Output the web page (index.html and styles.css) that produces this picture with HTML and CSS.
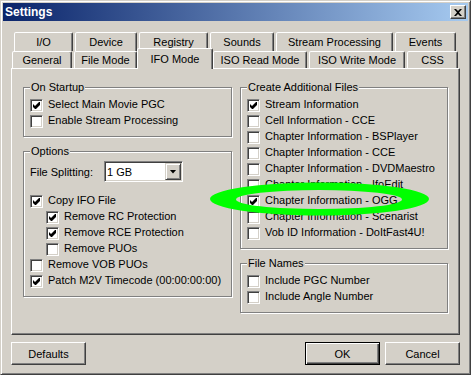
FILE: index.html
```html
<!DOCTYPE html>
<html lang="en">

<head>
	<meta charset="UTF-8">
	<title>Settings</title>
	<link rel="stylesheet" href="styles.css">
</head>

<body>
	<div class="window">
		<div class="titlebar">
			<span class="title">Settings</span>
			<span class="close">
				<svg width="8" height="7" viewBox="0 0 8 7"><path d="M0 0h2l2 2 2-2h2L5 3.5 8 7H6L4 5 2 7H0l3-3.5z"/></svg>
			</span>
		</div>
		<div class="client">
			<!-- tabs -->
			<div class="tabs">
				<div class="tabrow back">
					<div class="tab">I/O</div>
					<div class="tab">Device</div>
					<div class="tab">Registry</div>
					<div class="tab">Sounds</div>
					<div class="tab">Stream Processing</div>
					<div class="tab">Events</div>
				</div>
				<div class="tabrow front">
					<div class="tab">General</div>
					<div class="tab">File Mode</div>
					<div class="tab active">IFO Mode</div>
					<div class="tab">ISO Read Mode</div>
					<div class="tab">ISO Write Mode</div>
					<div class="tab">CSS</div>
				</div>
			</div>

			<div class="panel">
				<div class="col">
					<fieldset class="group">
						<legend>On Startup</legend>
						<div class="check"><span class="box on"></span>Select Main Movie PGC</div>
						<div class="check"><span class="box"></span>Enable Stream Processing</div>
					</fieldset>
					<fieldset class="group">
						<legend>Options</legend>
						<div class="field">
							<span class="field-label">File Splitting:</span>
							<div class="combo">
								<span class="combo-value">1 GB</span>
								<span class="combo-btn"><span class="arrow"></span></span>
							</div>
						</div>
						<div class="check"><span class="box on"></span>Copy IFO File</div>
						<div class="check sub"><span class="box on"></span>Remove RC Protection</div>
						<div class="check sub"><span class="box on"></span>Remove RCE Protection</div>
						<div class="check sub"><span class="box"></span>Remove PUOs</div>
						<div class="check"><span class="box"></span>Remove VOB PUOs</div>
						<div class="check"><span class="box on"></span>Patch M2V Timecode (00:00:00:00)</div>
					</fieldset>
				</div>
				<div class="col">
					<fieldset class="group">
						<legend>Create Additional Files</legend>
						<div class="check"><span class="box on"></span>Stream Information</div>
						<div class="check"><span class="box"></span>Cell Information - CCE</div>
						<div class="check"><span class="box"></span>Chapter Information - BSPlayer</div>
						<div class="check"><span class="box"></span>Chapter Information - CCE</div>
						<div class="check"><span class="box"></span>Chapter Information - DVDMaestro</div>
						<div class="check"><span class="box"></span>Chapter Information - IfoEdit</div>
						<div class="check"><span class="box on"></span>Chapter Information - OGG</div>
						<div class="check"><span class="box"></span>Chapter Information - Scenarist</div>
						<div class="check"><span class="box"></span>Vob ID Information - DoItFast4U!</div>
					</fieldset>
					<fieldset class="group">
						<legend>File Names</legend>
						<div class="check"><span class="box"></span>Include PGC Number</div>
						<div class="check"><span class="box"></span>Include Angle Number</div>
					</fieldset>
				</div>
			</div>

			<div class="buttons">
				<button class="btn">Defaults</button>
				<button class="btn default">OK</button>
				<button class="btn">Cancel</button>
			</div>
		</div>

		<!-- green marker drawn over the dialog -->
		<svg class="marker" width="471" height="375" viewBox="0 0 471 375">
			<path fill="#00ff00" fill-rule="evenodd" d="M210 199a109.5 16.5 0 1 0 219 0a109.5 16.5 0 1 0-219 0zM236 199.5a83 9.5 0 1 0 166 0a83 9.5 0 1 0-166 0z"/>
		</svg>
	</div>
</body>

</html>
```

FILE: styles.css
```css
body {
	margin: 0;
	padding: 0;
	background-color: #D4D0C8;
	font-family: "Liberation Sans", Arial, sans-serif;
	font-size: 11px;
	color: #000;
}

.window {
	position: relative;
	width: 471px;
	height: 375px;
	box-sizing: border-box;
	padding: 2px;
	border: 1px solid;
	border-color: #D4D0C8 #404040 #404040 #D4D0C8;
	box-shadow: inset 1px 1px #FFF, inset -1px -1px #808080;
}

.titlebar {
	height: 18px;
	padding: 0 2px;
	display: flex;
	align-items: center;
	justify-content: space-between;
	background: linear-gradient(to right, #0A246A, #A6CAF0);
}

.title {
	color: #FFF;
	font-weight: bold;
	font-size: 12px;
}

.close {
	width: 16px;
	height: 14px;
	box-sizing: border-box;
	display: flex;
	align-items: center;
	justify-content: center;
	background-color: #D4D0C8;
	border: 1px solid;
	border-color: #FFF #404040 #404040 #FFF;
	box-shadow: inset -1px -1px #808080;
}

.client {
	padding: 11px 8px 0;
}

/* tabs */
.tabrow {
	display: grid;
	column-gap: 2px;
}

.tabrow.back {
	height: 19px;
	margin-left: 3px;
	grid-template-columns: 59px 62px 69px 64px 117px 61px;
}

.tabrow.front {
	height: 17px;
	margin-left: 1px;
	grid-template-columns: 60px 63px 72px 94px 96px 51px;
}

.tab {
	box-sizing: border-box;
	display: flex;
	align-items: center;
	justify-content: center;
	background-color: #D4D0C8;
	border: 1px solid;
	border-bottom: none;
	border-color: #FFF #404040 transparent #FFF;
	border-radius: 2px 2px 0 0;
	box-shadow: inset -1px 0 #808080;
	white-space: nowrap;
}

.tab.active {
	position: relative;
	z-index: 1;
	margin: -3px -2px -1px;
	padding-bottom: 1px;
}

/* page */
.panel {
	height: 267px;
	box-sizing: border-box;
	padding: 12px 0 0 11px;
	display: grid;
	grid-template-columns: 209px 208px;
	column-gap: 8px;
	align-items: start;
	border: 1px solid;
	border-color: #FFF #404040 #404040 #FFF;
	box-shadow: inset -1px -1px #808080;
}

.group {
	min-width: 0;
	margin: 0 0 8px;
	padding: 3px 6px 7px;
	border: 1px solid #808080;
	box-shadow: 1px 1px #FFF, inset 1px 1px #FFF;
}

.group legend {
	padding: 0 1px;
	line-height: 13px;
	background-color: #D4D0C8;
}

.check {
	height: 16px;
	line-height: 15px;
	display: flex;
	align-items: flex-start;
	white-space: nowrap;
}

.check.sub {
	padding-left: 16px;
}

.box {
	flex: none;
	width: 13px;
	height: 13px;
	margin: 2px 5px 0 0;
	box-sizing: border-box;
	display: flex;
	align-items: center;
	justify-content: center;
	background-color: #FFF;
	border: 1px solid;
	border-color: #808080 #FFF #FFF #808080;
	box-shadow: inset 1px 1px #404040, inset -1px -1px #D4D0C8;
}

.box.on::after {
	content: "";
	width: 7px;
	height: 7px;
	background-color: #000;
	clip-path: polygon(0 2px, 2px 4px, 6px 0, 7px 0, 7px 3px, 3px 7px, 2px 7px, 0 5px);
}

.field {
	height: 21px;
	margin-bottom: 11px;
	display: flex;
	align-items: center;
}

.field-label {
	width: 74px;
}

.combo {
	width: 79px;
	height: 21px;
	box-sizing: border-box;
	padding: 1px;
	display: flex;
	align-items: center;
	background-color: #FFF;
	border: 1px solid;
	border-color: #808080 #FFF #FFF #808080;
	box-shadow: inset 1px 1px #404040, inset -1px -1px #D4D0C8;
}

.combo-value {
	padding-left: 1px;
}

.combo-btn {
	width: 16px;
	height: 17px;
	margin-left: auto;
	box-sizing: border-box;
	display: flex;
	align-items: center;
	justify-content: center;
	background-color: #D4D0C8;
	border: 1px solid;
	border-color: #D4D0C8 #404040 #404040 #D4D0C8;
	box-shadow: inset 1px 1px #FFF, inset -1px -1px #808080;
}

.arrow {
	width: 7px;
	height: 4px;
	background-color: #000;
	clip-path: polygon(0 0, 7px 0, 3.5px 4px);
}

/* buttons */
.buttons {
	margin-top: 7px;
	display: flex;
	gap: 5px;
}

.btn {
	width: 75px;
	height: 23px;
	padding: 0;
	font: inherit;
	color: #000;
	background-color: #D4D0C8;
	border: 1px solid;
	border-color: #FFF #404040 #404040 #FFF;
	box-shadow: inset -1px -1px #808080;
}

.btn:first-child {
	margin-right: auto;
}

.btn.default {
	border-color: #000;
	box-shadow: inset 1px 1px #FFF, inset -1px -1px #404040, inset -2px -2px #808080;
}

.marker {
	position: absolute;
	top: -1px;
	left: -1px;
	pointer-events: none;
}
```
